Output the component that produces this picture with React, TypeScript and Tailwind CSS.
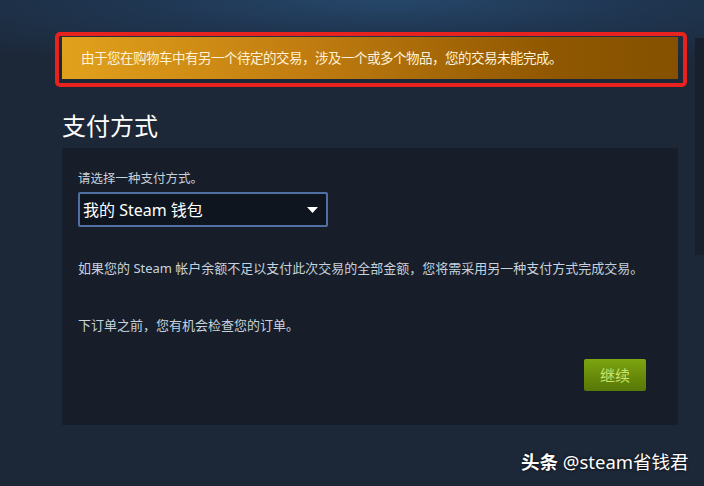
import React from "react";

export default function App() {
  return (
    <div
      className="relative flex w-[704px] h-[486px] overflow-hidden bg-[#1c2737] bg-[radial-gradient(ellipse_85%_75px_at_55%_0%,#26476a_0%,#1f3550_45%,#1c2737_100%)]"
      style={{ fontFamily: '"Noto Sans", "Noto Sans CJK SC", sans-serif' }}
    >
      <div className="ml-[62px] w-[616px] flex flex-col">
        <div className="relative mt-[37px]">
          <div className="h-[42px] flex items-center px-[19px] bg-[linear-gradient(90deg,#e2a11c_0%,#c07c10_40%,#8f5700_80%,#855100_100%)] text-[13.5px] text-[#fff2d6] tracking-[-0.5px]">
            由于您在购物车中有另一个待定的交易，涉及一个或多个物品，您的交易未能完成。
          </div>
          <div className="absolute left-[-7px] top-[-5px] right-[-9px] bottom-[-8px] border-[4px] border-[#e8221f] rounded-[5px] pointer-events-none" />
        </div>

        <h1 className="mt-[31px] h-[32px] leading-[32px] text-[24px] text-white font-normal">
          支付方式
        </h1>

        <div className="mt-[6px] h-[277px] bg-[#171e2a] px-[16px] flex flex-col">
          <div className="mt-[22px] h-[18px] leading-[18px] text-[12.5px] text-[#c6d2dd]">
            请选择一种支付方式。
          </div>
          <div className="mt-[4px] w-[250px] h-[35px] border-2 border-[#5070a2] rounded-[2px] bg-[#0f151e] flex items-center justify-between pl-[3px] pr-[8px]">
            <span className="text-[16px] text-white">我的 Steam 钱包</span>
            <svg width="11" height="6" viewBox="0 0 11 6">
              <polygon points="0,0 11,0 5.5,6" fill="#ffffff" />
            </svg>
          </div>
          <p className="mt-[32px] h-[18px] leading-[18px] text-[13px] text-[#c6d2dd]">
            如果您的 Steam 帐户余额不足以支付此次交易的全部金额，您将需采用另一种支付方式完成交易。
          </p>
          <p className="mt-[39px] h-[18px] leading-[18px] text-[13px] text-[#c6d2dd]">
            下订单之前，您有机会检查您的订单。
          </p>
          <div className="mt-[25px] flex justify-end pr-[16px]">
            <button className="w-[62px] h-[32px] rounded-[2px] bg-[linear-gradient(180deg,#7ca510_0%,#66880a_60%,#577806_100%)] text-[15px] text-[#c8e26a]">
              继续
            </button>
          </div>
        </div>
      </div>

      <div className="ml-[17px] mt-[38px] w-[9px] h-[217px] bg-[#17202c]" />

      <div className="absolute left-[521px] top-[448px] text-[18.5px] text-white [text-shadow:0_0_3px_rgba(0,0,0,0.8)] whitespace-nowrap">
        <span className="font-bold">头条</span> @steam省钱君
      </div>
    </div>
  );
}
